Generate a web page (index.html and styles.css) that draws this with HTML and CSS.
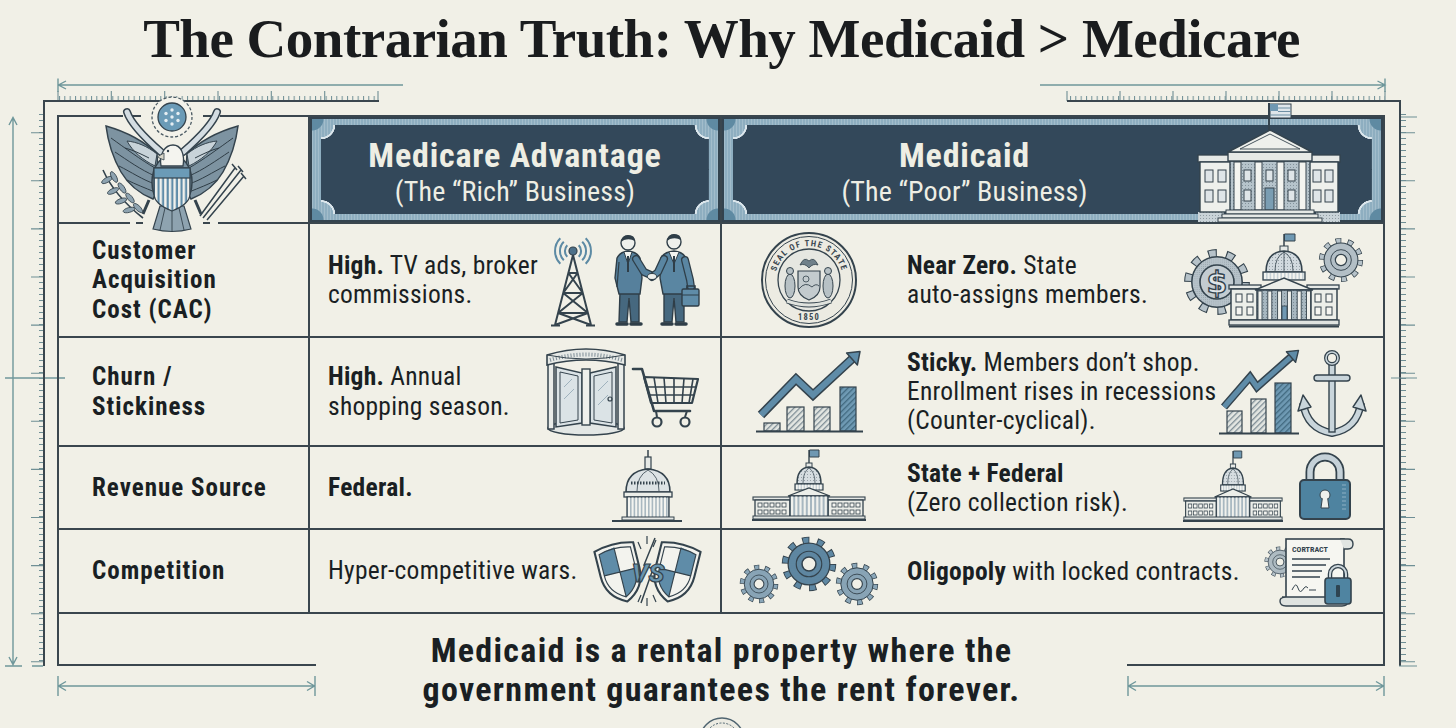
FILE: index.html
```html
<!DOCTYPE html>
<html lang="en">
<head>
<meta charset="utf-8">
<title>The Contrarian Truth: Why Medicaid &gt; Medicare</title>
<link rel="stylesheet" href="styles.css">
</head>
<body>
<svg class="defs" width="0" height="0" aria-hidden="true">
  <defs>
    <pattern id="tkH" width="5.333" height="6" patternUnits="userSpaceOnUse"><line x1="0.5" y1="0" x2="0.5" y2="6" stroke="#6f8f95" stroke-width="1"/></pattern>
    <pattern id="tkVL" x="35" y="0" width="8" height="6" patternUnits="userSpaceOnUse"><line x1="4" y1="0.5" x2="8" y2="0.5" stroke="#6f8f95" stroke-width="1"/></pattern>
    <pattern id="tkVR" width="8" height="6" patternUnits="userSpaceOnUse"><line x1="0" y1="0.5" x2="5" y2="0.5" stroke="#6f8f95" stroke-width="1"/></pattern>
    <pattern id="hatch" width="4" height="4" patternUnits="userSpaceOnUse" patternTransform="rotate(45)"><rect width="4" height="4" fill="#e3e6e2"/><rect width="1.3" height="4" fill="#7d8c95"/></pattern>
    <pattern id="hatchB" width="4" height="4" patternUnits="userSpaceOnUse" patternTransform="rotate(45)"><rect width="4" height="4" fill="#6f9ab4"/><rect width="1.3" height="4" fill="#41697f"/></pattern>
    <pattern id="dots" width="3" height="3" patternUnits="userSpaceOnUse"><circle cx="1.5" cy="1.5" r="0.55" fill="#34434d" fill-opacity="0.45"/></pattern>
    <pattern id="stripes" width="4.6" height="10" patternUnits="userSpaceOnUse"><rect width="4.6" height="10" fill="#f2f2ed"/><rect x="0.6" width="2.2" height="10" fill="#5f8ca8"/></pattern>
    <g id="gearG">
      <circle r="40" fill="none" stroke="#34434d" stroke-width="14" stroke-dasharray="12 13.133"/>
      <circle r="40" fill="none" stroke="currentColor" stroke-width="11" stroke-dasharray="9 16.133" stroke-dashoffset="-1.5"/>
      <circle r="36" fill="currentColor" stroke="#34434d" stroke-width="2.2"/>
      <circle r="36" fill="url(#dots)"/>
      <circle r="22" fill="none" stroke="#34434d" stroke-width="2"/>
      <circle r="12" fill="#f1f0e7" stroke="#34434d" stroke-width="2.6"/>
    </g>
    <g id="capitolTall">
      <line x1="55" y1="2" x2="55" y2="15" stroke="#34434d" stroke-width="1.5"/>
      <path d="M55.5,2 H66 V9 H55.5 Z" fill="#6f98b2" stroke="#34434d" stroke-width="1"/>
      <rect x="51" y="14" width="8" height="6" fill="#e7eae7" stroke="#34434d" stroke-width="1"/>
      <path d="M37,40 Q37,20 55,19 Q73,20 73,40 Z" fill="#d2dadf" stroke="#34434d" stroke-width="1.6"/>
      <path d="M37,40 Q37,20 55,19 Q73,20 73,40 Z" fill="url(#dots)"/>
      <path d="M46,39 Q46,25 55,20 M64,39 Q64,25 55,20 M55,20 V39" fill="none" stroke="#34434d" stroke-width="0.8"/>
      <rect x="34" y="40" width="42" height="8" fill="#c7d1d6" stroke="#34434d" stroke-width="1.3"/>
      <line x1="35" y1="44" x2="75" y2="44" stroke="#f3f4f0" stroke-width="6" stroke-dasharray="2 1.6"/>
      <rect x="0" y="53" width="32" height="4" fill="#e6e9e6" stroke="#34434d" stroke-width="1.3"/>
      <rect x="78" y="53" width="32" height="4" fill="#e6e9e6" stroke="#34434d" stroke-width="1.3"/>
      <rect x="2" y="57" width="28" height="31" fill="#eceee9" stroke="#34434d" stroke-width="1.5"/>
      <rect x="80" y="57" width="28" height="31" fill="#eceee9" stroke="#34434d" stroke-width="1.5"/>
      <path d="M26,58 L55,46 L84,58 Z" fill="#eceee9" stroke="#34434d" stroke-width="1.5"/>
      <rect x="28" y="58" width="54" height="30" fill="#a7b7c0" stroke="#34434d" stroke-width="1.5"/>
      <rect x="28" y="58" width="54" height="30" fill="url(#dots)"/>
      <g fill="#f0f1ed" stroke="#34434d" stroke-width="0.9">
        <rect x="29" y="59" width="4" height="29"/><rect x="38.8" y="59" width="4" height="29"/><rect x="48.6" y="59" width="4" height="29"/><rect x="58.4" y="59" width="4" height="29"/><rect x="68.2" y="59" width="4" height="29"/><rect x="77.5" y="59" width="4" height="29"/>
      </g>
      <rect x="53" y="74" width="5" height="14" fill="#6f98b2" stroke="#34434d" stroke-width="0.8"/>
      <g fill="#f5f5f1" stroke="#34434d" stroke-width="1">
        <rect x="7" y="62" width="6" height="8"/><rect x="18" y="62" width="6" height="8"/><rect x="7" y="75" width="6" height="8"/><rect x="18" y="75" width="6" height="8"/>
        <rect x="86" y="62" width="6" height="8"/><rect x="97" y="62" width="6" height="8"/><rect x="86" y="75" width="6" height="8"/><rect x="97" y="75" width="6" height="8"/>
      </g>
      <rect x="0" y="88" width="110" height="5" fill="#dfe3e0" stroke="#34434d" stroke-width="1.3"/>
      <line x1="0" y1="94.5" x2="110" y2="94.5" stroke="#34434d" stroke-width="2"/>
    </g>
    <g id="capitolWide">
      <line x1="57" y1="1" x2="57" y2="15" stroke="#34434d" stroke-width="1.4"/>
      <path d="M57.5,1 H67 V8 H57.5 Z" fill="#6f98b2" stroke="#34434d" stroke-width="1"/>
      <rect x="54" y="14" width="6" height="5" fill="#e7eae7" stroke="#34434d" stroke-width="1"/>
      <path d="M45,35 Q45,19 57,18 Q69,19 69,35 Z" fill="#d6dde1" stroke="#34434d" stroke-width="1.5"/>
      <path d="M45,35 Q45,19 57,18 Q69,19 69,35 Z" fill="url(#dots)"/>
      <path d="M51,34 Q51,23 57,19 M63,34 Q63,23 57,19" fill="none" stroke="#34434d" stroke-width="0.7"/>
      <rect x="43" y="35" width="28" height="6" fill="#c7d1d6" stroke="#34434d" stroke-width="1.2"/>
      <line x1="44" y1="38" x2="70" y2="38" stroke="#f3f4f0" stroke-width="4.5" stroke-dasharray="1.6 1.4"/>
      <rect x="1" y="48" width="39" height="3" fill="#e6e9e6" stroke="#34434d" stroke-width="1.1"/>
      <rect x="74" y="48" width="39" height="3" fill="#e6e9e6" stroke="#34434d" stroke-width="1.1"/>
      <rect x="3" y="51" width="35" height="17" fill="#eceee9" stroke="#34434d" stroke-width="1.3"/>
      <rect x="76" y="51" width="35" height="17" fill="#eceee9" stroke="#34434d" stroke-width="1.3"/>
      <path d="M36,47 L57,39 L78,47 Z" fill="#eceee9" stroke="#34434d" stroke-width="1.3"/>
      <rect x="38" y="47" width="38" height="21" fill="#a7b7c0" stroke="#34434d" stroke-width="1.3"/>
      <line x1="39" y1="57.5" x2="75" y2="57.5" stroke="#f0f1ed" stroke-width="20" stroke-dasharray="2.2 2"/>
      <g fill="#f5f5f1" stroke="#34434d" stroke-width="0.8">
        <rect x="6" y="54" width="4" height="4"/><rect x="12" y="54" width="4" height="4"/><rect x="18" y="54" width="4" height="4"/><rect x="24" y="54" width="4" height="4"/><rect x="30" y="54" width="4" height="4"/>
        <rect x="6" y="61" width="4" height="4"/><rect x="12" y="61" width="4" height="4"/><rect x="18" y="61" width="4" height="4"/><rect x="24" y="61" width="4" height="4"/><rect x="30" y="61" width="4" height="4"/>
        <rect x="80" y="54" width="4" height="4"/><rect x="86" y="54" width="4" height="4"/><rect x="92" y="54" width="4" height="4"/><rect x="98" y="54" width="4" height="4"/><rect x="104" y="54" width="4" height="4"/>
        <rect x="80" y="61" width="4" height="4"/><rect x="86" y="61" width="4" height="4"/><rect x="92" y="61" width="4" height="4"/><rect x="98" y="61" width="4" height="4"/><rect x="104" y="61" width="4" height="4"/>
      </g>
      <rect x="1" y="67" width="112" height="3" fill="#dfe3e0" stroke="#34434d" stroke-width="1"/>
      <line x1="0" y1="71" x2="114" y2="71" stroke="#34434d" stroke-width="2"/>
    </g>
  </defs>
</svg>

<main class="page">
  <h1 class="title">The Contrarian Truth: Why Medicaid &gt; Medicare</h1>

  <div class="top-rulers">
    <svg class="ruler-h" width="362" height="24" viewBox="0 0 362 24">
      <path d="M15,7 H360 M23,3 L15.5,7 L23,11 M15,0.5 V14" fill="none" stroke="#6f979b" stroke-width="1.4"/>
      <rect x="15" y="18" width="320" height="5" fill="url(#tkH)"/>
      <path d="M15,13 V23 M68.3,13 V23 M121.7,13 V23 M175,13 V23 M228.3,13 V23 M281.7,13 V23 M335,13 V23" stroke="#6f8f95" stroke-width="1.1"/>
      <line x1="0" y1="23" x2="336" y2="23" stroke="#3a464e" stroke-width="2"/>
    </svg>
    <svg class="ruler-h" width="382" height="24" viewBox="0 0 382 24">
      <path d="M2,7 H347 M339.5,3 L347,7 L339.5,11 M347,0.5 V14" fill="none" stroke="#6f979b" stroke-width="1.4"/>
      <rect x="29" y="18" width="318" height="5" fill="url(#tkH)"/>
      <path d="M29,13 V23 M82,13 V23 M135,13 V23 M188,13 V23 M241,13 V23 M294,13 V23 M347,13 V23" stroke="#6f8f95" stroke-width="1.1"/>
      <line x1="29" y1="23" x2="363" y2="23" stroke="#3a464e" stroke-width="2"/>
    </svg>
  </div>

  <div class="body-row">
    <svg class="ruler-v" width="43" height="564" viewBox="0 0 43 564">
      <path d="M13,15 V563 M9,23 L13,15.5 L17,23 M9,555 L13,562.5 L17,555 M5,564 H22 M32,564 H43" fill="none" stroke="#6f979b" stroke-width="1.4"/>
      <rect x="35" y="12" width="8" height="552" fill="url(#tkVL)"/>
      <path d="M31,30.7H43 M31,78.8H43 M31,126.9H43 M31,175H43 M31,223.1H43 M31,271.2H43 M31,319.3H43 M31,367.4H43 M31,415.5H43 M31,463.6H43 M31,511.7H43 M31,559.8H43" stroke="#6f8f95" stroke-width="1.1"/>
      <line x1="5" y1="276" x2="65" y2="276" stroke="#6f979b" stroke-width="1.3"/>
    </svg>

    <div class="frame">
      <div class="table">
        <!-- header -->
        <div class="cell head-label">
          <svg class="eagle" width="150" height="136" viewBox="0 0 150 136">
            <rect x="26" y="17.5" width="97" height="5" fill="#f1f0e7"/>
            <rect x="33" y="124.5" width="88" height="5" fill="#f1f0e7"/>
            <path d="M35,20 H44 M106,20 H114 M39,127 H46 M106,127 H113" stroke="#3a464e" stroke-width="2"/>
            <g id="wingL">
              <path d="M60,58 C48,46 30,36 9,30 C11,46 16,62 24,76 C31,88 41,97 56,103 L62,92 Z" fill="#7d93a1" stroke="#34434d" stroke-width="1.5"/>
              <path d="M60,58 C50,50 40,46 30,45 C36,56 46,64 58,70 Z" fill="#c8d3d9" stroke="#34434d" stroke-width="1"/>
              <path d="M58,72 C44,64 28,52 14,42 M58,80 C44,74 30,64 18,56 M58,88 C46,84 34,76 22,70 M58,96 C48,92 38,88 30,84 M52,62 C44,58 36,54 28,52" fill="none" stroke="#2f3d46" stroke-width="1"/>
            </g>
            <use href="#wingL" transform="matrix(-1 0 0 1 150 0)"/>
            <path d="M63,110 L56,133 Q75,138 94,133 L87,110 Z" fill="#8ea3b0" stroke="#34434d" stroke-width="1.2"/>
            <path d="M68,112 L63,134 M75,112 L75,136 M82,112 L87,134" stroke="#34434d" stroke-width="0.9"/>
            <ellipse cx="75" cy="86" rx="20" ry="27" fill="#7d93a1" stroke="#34434d" stroke-width="1.5"/>
            <path d="M6,74 C14,92 28,108 46,122" fill="none" stroke="#34434d" stroke-width="1.6"/>
            <g fill="#8ea3b0" stroke="#34434d" stroke-width="0.8">
              <ellipse rx="6" ry="2.4" transform="translate(10,84) rotate(-30)"/>
              <ellipse rx="6" ry="2.4" transform="translate(17,81) rotate(60)"/>
              <ellipse rx="6" ry="2.4" transform="translate(16,95) rotate(-25)"/>
              <ellipse rx="6" ry="2.4" transform="translate(25,92) rotate(55)"/>
              <ellipse rx="6" ry="2.4" transform="translate(24,105) rotate(-20)"/>
              <ellipse rx="6" ry="2.4" transform="translate(33,102) rotate(50)"/>
              <ellipse rx="6" ry="2.4" transform="translate(32,114) rotate(-15)"/>
              <ellipse rx="6" ry="2.4" transform="translate(41,112) rotate(45)"/>
            </g>
            <path d="M144,74 L106,122 M138,72 L103,120 M147,80 L110,124 M141,70 L146,76 M135,68 L140,74 M144,77 L149,83" fill="none" stroke="#34434d" stroke-width="1.5"/>
            <path d="M52,104 L46,118 M98,104 L104,118" stroke="#34434d" stroke-width="3"/>
            <path d="M30,16 C34,28 48,42 64,56" fill="none" stroke="#34434d" stroke-width="8" stroke-linecap="round"/>
            <path d="M30,16 C34,28 48,42 64,56" fill="none" stroke="#d4dde2" stroke-width="5" stroke-linecap="round"/>
            <path d="M120,16 C116,28 102,42 86,56" fill="none" stroke="#34434d" stroke-width="8" stroke-linecap="round"/>
            <path d="M120,16 C116,28 102,42 86,56" fill="none" stroke="#d4dde2" stroke-width="5" stroke-linecap="round"/>
            <path d="M64,70 C62,58 68,49 76,49 C84,49 88,58 86,70 Z" fill="#f4f4ef" stroke="#34434d" stroke-width="1.3"/>
            <path d="M67,57 L60,61 L67,64 Z" fill="#d8d6c9" stroke="#34434d" stroke-width="0.8"/>
            <circle cx="71" cy="55" r="1.2" fill="#34434d"/>
            <path d="M57,72 H93 V98 C93,106 85,111 75,115 C65,111 57,106 57,98 Z" fill="url(#stripes)" stroke="#34434d" stroke-width="1.3"/>
            <rect x="57" y="72" width="36" height="10" fill="#6b9bb7" stroke="#34434d" stroke-width="1.2"/>
            <circle cx="75" cy="21" r="20" fill="#f3f2ea" stroke="#4b5a63" stroke-width="1.3" stroke-dasharray="3 2"/>
            <circle cx="75" cy="21" r="14" fill="#6b9bb7" stroke="#34434d" stroke-width="1.3"/>
            <g fill="#e6eef2">
              <circle cx="75" cy="14" r="1.7"/><circle cx="69" cy="17.5" r="1.7"/><circle cx="81" cy="17.5" r="1.7"/><circle cx="75" cy="21" r="1.7"/><circle cx="69" cy="24.5" r="1.7"/><circle cx="81" cy="24.5" r="1.7"/><circle cx="75" cy="28" r="1.7"/>
            </g>
          </svg>
        </div>
        <div class="cell head">
          <div class="banner">
            <div class="banner-inner">
              <div class="banner-text">
                <div class="b-title">Medicare Advantage</div>
                <div class="b-sub">(The “Rich” Business)</div>
              </div>
            </div>
          </div>
        </div>
        <div class="cell head c3">
          <div class="banner">
            <div class="banner-inner">
              <div class="banner-text">
                <div class="b-title">Medicaid</div>
                <div class="b-sub">(The “Poor” Business)</div>
              </div>
              <svg class="bldg" width="146" height="122" viewBox="0 0 146 122">
                <line x1="73" y1="3" x2="73" y2="32" stroke="#34434d" stroke-width="2"/>
                <rect x="74" y="4" width="21" height="14" fill="#dfe6ea" stroke="#34434d" stroke-width="1"/>
                <path d="M82,8 H95 M82,11.5 H95 M74,15 H95" stroke="#6f8fa3" stroke-width="1.2"/>
                <rect x="74" y="4" width="8" height="7" fill="#6f98b2"/>
                <rect x="2" y="112" width="26" height="10" fill="#c9d3d8"/>
                <rect x="120" y="112" width="24" height="10" fill="#c9d3d8"/>
                <rect x="2" y="112" width="142" height="10" fill="url(#dots)"/>
                <rect x="2" y="55" width="34" height="7" fill="#e6e9e6" stroke="#34434d" stroke-width="1.3"/>
                <rect x="112" y="55" width="32" height="7" fill="#e6e9e6" stroke="#34434d" stroke-width="1.3"/>
                <rect x="4" y="62" width="32" height="50" fill="#eef0ec" stroke="#34434d" stroke-width="1.4"/>
                <rect x="112" y="62" width="30" height="50" fill="#eef0ec" stroke="#34434d" stroke-width="1.4"/>
                <rect x="34" y="61" width="80" height="50" fill="#b5c3cb" stroke="#34434d" stroke-width="1.4"/>
                <rect x="34" y="61" width="80" height="50" fill="url(#dots)"/>
                <g fill="#f3f4f0" stroke="#34434d" stroke-width="1">
                  <rect x="38" y="62" width="7" height="48"/><rect x="59" y="62" width="7" height="48"/><rect x="81" y="62" width="7" height="48"/><rect x="103" y="62" width="7" height="48"/>
                </g>
                <g fill="#dfe5e8" stroke="#34434d" stroke-width="1">
                  <rect x="9" y="70" width="8" height="12"/><rect x="22" y="70" width="8" height="12"/><rect x="9" y="90" width="8" height="12"/><rect x="22" y="90" width="8" height="12"/>
                  <rect x="117" y="70" width="8" height="12"/><rect x="129" y="70" width="8" height="12"/><rect x="117" y="90" width="8" height="12"/><rect x="129" y="90" width="8" height="12"/>
                  <rect x="48" y="70" width="7" height="11"/><rect x="70" y="70" width="7" height="11"/><rect x="92" y="70" width="7" height="11"/>
                  <rect x="48" y="90" width="7" height="11"/><rect x="92" y="90" width="7" height="11"/>
                </g>
                <rect x="69" y="88" width="9" height="22" fill="#7a9db2" stroke="#34434d" stroke-width="1"/>
                <rect x="32" y="52" width="84" height="9" fill="#e6e9e6" stroke="#34434d" stroke-width="1.4"/>
                <path d="M32,52 L74,30 L116,52 Z" fill="#eef0ec" stroke="#34434d" stroke-width="1.5"/>
                <path d="M44,49 L74,34 L104,49 Z" fill="none" stroke="#34434d" stroke-width="0.9"/>
                <rect x="30" y="110" width="88" height="4" fill="#e6e9e6" stroke="#34434d" stroke-width="1"/>
                <rect x="26" y="114" width="96" height="4" fill="#e6e9e6" stroke="#34434d" stroke-width="1"/>
                <rect x="22" y="118" width="104" height="4" fill="#e6e9e6" stroke="#34434d" stroke-width="1"/>
              </svg>
            </div>
          </div>
        </div>

        <!-- row 1 -->
        <div class="cell lab"><div class="txt">Customer<br>Acquisition<br>Cost (CAC)</div></div>
        <div class="cell mc">
          <div class="txt"><b>High.</b> TV ads, broker<br>commissions.</div>
          <div class="icons gap16">
            <svg class="ic" width="46" height="94" viewBox="0 0 46 94">
              <path d="M17.3,12.3 A8,8 0 0 0 17.3,23.7 M13.8,8.8 A13,13 0 0 0 13.8,27.2 M10.3,5.3 A18,18 0 0 0 10.3,30.7 M28.7,12.3 A8,8 0 0 1 28.7,23.7 M32.2,8.8 A13,13 0 0 1 32.2,27.2 M35.7,5.3 A18,18 0 0 1 35.7,30.7" fill="none" stroke="#5c8aa4" stroke-width="2"/>
              <path d="M23,22 L5,92 M23,22 L41,92 M18.4,40 H27.6 M13.2,60 H32.8 M8.1,80 H37.9 M18.4,40 L32.8,60 M27.6,40 L13.2,60 M13.2,60 L37.9,80 M32.8,60 L8.1,80 M8.1,80 L41,92 M37.9,80 L5,92 M23,22 L27.6,40 M23,22 L18.4,40" fill="none" stroke="#34434d" stroke-width="2"/>
              <path d="M1,92.5 H10 M36,92.5 H45" stroke="#34434d" stroke-width="2"/>
              <circle cx="23" cy="18" r="4" fill="#4d7089" stroke="#34434d" stroke-width="1.2"/>
            </svg>
            <svg class="ic" width="88" height="97" viewBox="0 0 88 97">
              <path d="M8,60 L7,90 L15,90 L17,66 L19,90 L27,90 L27,60 Z" fill="#46687f" stroke="#2f3e48" stroke-width="1.4"/>
              <path d="M5,92 H15 M19,92 H29" stroke="#2f3e48" stroke-width="3.5" stroke-linecap="round"/>
              <path d="M5,26 Q8,20 16,19 Q25,20 28,26 L30,46 L28,62 L7,62 L3,46 Z" fill="#56809c" stroke="#2f3e48" stroke-width="1.4"/>
              <path d="M12,20 L16,32 L20,20" fill="#f2f3ef" stroke="#2f3e48" stroke-width="1"/>
              <path d="M16,24 L16,40" stroke="#2f3e48" stroke-width="2"/>
              <path d="M7,30 L5,55" stroke="#2f3e48" stroke-width="1.2"/>
              <path d="M24,27 L32,40 L41,44" fill="none" stroke="#2f3e48" stroke-width="8" stroke-linecap="round" stroke-linejoin="round"/>
              <path d="M24,27 L32,40 L41,44" fill="none" stroke="#56809c" stroke-width="5.4" stroke-linecap="round" stroke-linejoin="round"/>
              <circle cx="16" cy="11" r="7" fill="#eef0ec" stroke="#2f3e48" stroke-width="1.4"/>
              <path d="M9,10 Q10,3 16,3 Q23,3 23,9 Q18,6 12,8 Z" fill="#2f3e48"/>
              <path d="M52,60 L52,90 L60,90 L62,66 L64,90 L72,90 L72,60 Z" fill="#46687f" stroke="#2f3e48" stroke-width="1.4"/>
              <path d="M50,92 H60 M64,92 H74" stroke="#2f3e48" stroke-width="3.5" stroke-linecap="round"/>
              <path d="M49,26 Q52,20 62,19 Q71,20 74,26 L77,46 L74,62 L51,62 L48,46 Z" fill="#5a86a2" stroke="#2f3e48" stroke-width="1.4"/>
              <path d="M57,20 L62,32 L67,20" fill="#f2f3ef" stroke="#2f3e48" stroke-width="1"/>
              <path d="M62,24 L62,40" stroke="#2f3e48" stroke-width="2"/>
              <path d="M52,27 L46,40 L40,45" fill="none" stroke="#2f3e48" stroke-width="8" stroke-linecap="round" stroke-linejoin="round"/>
              <path d="M52,27 L46,40 L40,45" fill="none" stroke="#5a86a2" stroke-width="5.4" stroke-linecap="round" stroke-linejoin="round"/>
              <path d="M73,28 L78,48 L79,55" fill="none" stroke="#2f3e48" stroke-width="8" stroke-linecap="round" stroke-linejoin="round"/>
              <path d="M73,28 L78,48 L79,55" fill="none" stroke="#5a86a2" stroke-width="5.4" stroke-linecap="round" stroke-linejoin="round"/>
              <path d="M75,58 V54 H83 V58" fill="none" stroke="#2f3e48" stroke-width="1.6"/>
              <rect x="70" y="57" width="17" height="17" rx="1.5" fill="#5f8ca8" stroke="#2f3e48" stroke-width="1.4"/>
              <path d="M70,63 H87" stroke="#2f3e48" stroke-width="1"/>
              <ellipse cx="40" cy="44.5" rx="4.5" ry="3" fill="#eef0ec" stroke="#2f3e48" stroke-width="1"/>
              <circle cx="62" cy="10" r="7" fill="#eef0ec" stroke="#2f3e48" stroke-width="1.4"/>
              <path d="M55,9 Q56,2 62,2 Q69,2 69,8 Q64,5 58,7 Z" fill="#2f3e48"/>
            </svg>
          </div>
        </div>
        <div class="cell md c3">
          <div class="lead">
            <svg class="ic" width="98" height="98" viewBox="0 0 98 98">
              <defs><path id="sealTop" d="M15,49 A34,34 0 0 1 83,49"/></defs>
              <circle cx="49" cy="49" r="47" fill="#ecebe2" stroke="#34434d" stroke-width="2"/>
              <circle cx="49" cy="49" r="43.5" fill="none" stroke="#34434d" stroke-width="1"/>
              <circle cx="49" cy="49" r="31" fill="#e6e7e1" stroke="#34434d" stroke-width="1.3"/>
              <text class="seal-txt"><textPath href="#sealTop" startOffset="50%" text-anchor="middle">SEAL OF THE STATE</textPath></text>
              <text class="seal-txt" x="49" y="89" text-anchor="middle">1850</text>
              <ellipse cx="30" cy="55" rx="5" ry="12" fill="#b7c1c5" stroke="#34434d" stroke-width="1"/>
              <circle cx="30" cy="40" r="3.5" fill="#b7c1c5" stroke="#34434d" stroke-width="1"/>
              <ellipse cx="68" cy="55" rx="5" ry="12" fill="#b7c1c5" stroke="#34434d" stroke-width="1"/>
              <circle cx="68" cy="40" r="3.5" fill="#b7c1c5" stroke="#34434d" stroke-width="1"/>
              <path d="M38,40 H60 V56 Q60,65 49,69 Q38,65 38,56 Z" fill="#c3cbce" stroke="#34434d" stroke-width="1.2"/>
              <path d="M39,58 Q45,50 52,56 Q56,52 59,55" fill="none" stroke="#34434d" stroke-width="0.9"/>
              <circle cx="46" cy="48" r="3" fill="none" stroke="#34434d" stroke-width="0.8"/>
              <path d="M40,34 Q44,25 49,30 Q54,25 58,34 Q53,32 49,37 Q45,32 40,34 Z" fill="#6f808a" stroke="#34434d" stroke-width="0.8"/>
              <path d="M27,70 Q49,78 71,70" fill="none" stroke="#34434d" stroke-width="5"/>
              <path d="M27,70 Q49,78 71,70" fill="none" stroke="#dfe2dd" stroke-width="3"/>
            </svg>
          </div>
          <div class="txt"><b>Near Zero.</b> State<br>auto-assigns members.</div>
          <div class="icons">
            <svg class="ic" width="184" height="96" viewBox="0 0 184 96">
              <use href="#gearG" class="gear-gray" transform="translate(36,50) scale(0.7)"/>
              <circle cx="36" cy="50" r="17" fill="#c3ccd1" stroke="#34434d" stroke-width="1.6"/>
              <text class="dollar" x="36" y="61" text-anchor="middle">$</text>
              <use href="#gearG" class="gear-gray" transform="translate(160,28) scale(0.47)"/>
              <use href="#capitolTall" x="48" y="0"/>
            </svg>
          </div>
        </div>

        <!-- row 2 -->
        <div class="cell lab"><div class="txt">Churn /<br>Stickiness</div></div>
        <div class="cell mc">
          <div class="txt"><b>High.</b> Annual<br>shopping season.</div>
          <div class="icons gap6">
            <svg class="ic" width="80" height="90" viewBox="0 0 80 90">
              <ellipse cx="40" cy="81" rx="38" ry="7" fill="#e3e7e5" stroke="#34434d" stroke-width="1.6"/>
              <path d="M10,20 L36,26 L36,76 L10,80 Z" fill="#dbe3e6" stroke="#34434d" stroke-width="1.5"/>
              <path d="M44,26 L70,20 L70,80 L44,76 Z" fill="#dbe3e6" stroke="#34434d" stroke-width="1.5"/>
              <path d="M14,25 L32,29 L32,73 L14,76 Z M48,29 L66,25 L66,76 L48,73 Z" fill="none" stroke="#34434d" stroke-width="1"/>
              <path d="M18,40 L26,32 M18,52 L28,42 M52,44 L62,34 M52,58 L62,48" stroke="#9fb2bd" stroke-width="1"/>
              <rect x="36" y="22" width="8" height="56" fill="#eef0ec" stroke="#34434d" stroke-width="1.4"/>
              <rect x="2" y="16" width="6" height="66" fill="#e9ece9" stroke="#34434d" stroke-width="1.5"/>
              <rect x="72" y="16" width="6" height="66" fill="#e9ece9" stroke="#34434d" stroke-width="1.5"/>
              <path d="M1,8 Q40,-4 79,8 L79,18 Q40,8 1,18 Z" fill="#e6e9e6" stroke="#34434d" stroke-width="1.6"/>
              <path d="M4,13 Q40,2 76,13" fill="none" stroke="#7c8c95" stroke-width="4" stroke-dasharray="1 2"/>
              <path d="M1,8 Q40,16 79,8" fill="none" stroke="#34434d" stroke-width="1"/>
              <circle cx="64" cy="52" r="2" fill="none" stroke="#34434d" stroke-width="1.2"/>
            </svg>
            <svg class="ic cart" width="68" height="64" viewBox="0 0 68 64">
              <path d="M1,4 H10 L22,46 H58" fill="none" stroke="#34434d" stroke-width="2.6" stroke-linejoin="round" stroke-linecap="round"/>
              <path d="M12,12 L66,14 L60,38 L19,38 Z" fill="none" stroke="#34434d" stroke-width="2.2" stroke-linejoin="round"/>
              <path d="M22,12.4 L26,38 M32,12.8 L34,38 M42,13.2 L42,38 M52,13.6 L50,38 M61,14 L57,38 M15,22 H63.6 M17,30 H61.5" stroke="#34434d" stroke-width="1.6"/>
              <path d="M24,46 L25,52 M55,46 L53,52" stroke="#34434d" stroke-width="2"/>
              <circle cx="25" cy="57" r="4.5" fill="#f1f0e7" stroke="#34434d" stroke-width="2.2"/>
              <circle cx="53" cy="57" r="4.5" fill="#f1f0e7" stroke="#34434d" stroke-width="2.2"/>
            </svg>
          </div>
        </div>
        <div class="cell md c3">
          <div class="lead">
            <svg class="ic" width="107" height="86" viewBox="0 0 107 86">
              <rect x="8" y="74" width="16" height="8" fill="url(#hatch)" stroke="#34434d" stroke-width="1.2"/>
              <rect x="31" y="58" width="17" height="24" fill="url(#hatch)" stroke="#34434d" stroke-width="1.2"/>
              <rect x="58" y="58" width="16" height="24" fill="url(#hatch)" stroke="#34434d" stroke-width="1.2"/>
              <rect x="84" y="38" width="16" height="44" fill="url(#hatchB)" stroke="#34434d" stroke-width="1.2"/>
              <path d="M0,82.5 H107" stroke="#34434d" stroke-width="2"/>
              <path d="M5,66 L40,30 L57,46 L96,10" fill="none" stroke="#34434d" stroke-width="9"/>
              <path d="M5,66 L40,30 L57,46 L96,10" fill="none" stroke="#5f8ca8" stroke-width="6"/>
              <path d="M104,2.5 L101.4,15.9 L90.6,4.1 Z" fill="#5f8ca8" stroke="#34434d" stroke-width="1.5" stroke-linejoin="round"/>
            </svg>
          </div>
          <div class="txt"><b>Sticky.</b> Members don’t shop.<br>Enrollment rises in recessions<br>(Counter-cyclical).</div>
          <div class="icons">
            <svg class="ic" width="148" height="90" viewBox="0 0 148 90">
              <rect x="10" y="64" width="15" height="22" fill="url(#hatch)" stroke="#34434d" stroke-width="1.2"/>
              <rect x="34" y="52" width="15" height="34" fill="url(#hatch)" stroke="#34434d" stroke-width="1.2"/>
              <rect x="58" y="36" width="16" height="50" fill="url(#hatchB)" stroke="#34434d" stroke-width="1.2"/>
              <path d="M2,86.5 H82" stroke="#34434d" stroke-width="2"/>
              <path d="M7,60 L33,30 L40,40 L74,10" fill="none" stroke="#34434d" stroke-width="8"/>
              <path d="M7,60 L33,30 L40,40 L74,10" fill="none" stroke="#5f8ca8" stroke-width="5"/>
              <path d="M81.5,3.4 L78.6,15.25 L69.4,4.75 Z" fill="#5f8ca8" stroke="#34434d" stroke-width="1.4" stroke-linejoin="round"/>
              <path d="M86,56 Q90,82 115,86 Q140,82 144,56" fill="none" stroke="#34434d" stroke-width="8"/>
              <path d="M86,56 Q90,82 115,86 Q140,82 144,56" fill="none" stroke="#c9d5db" stroke-width="5"/>
              <path d="M81,64 L86,48 L94,60 Z M149,64 L144,48 L136,60 Z" fill="#c9d5db" stroke="#34434d" stroke-width="1.4" stroke-linejoin="round"/>
              <rect x="112" y="17" width="6" height="68" fill="#c9d5db" stroke="#34434d" stroke-width="1.4"/>
              <rect x="97" y="28" width="36" height="6" rx="3" fill="#c9d5db" stroke="#34434d" stroke-width="1.4"/>
              <circle cx="115" cy="11" r="6" fill="none" stroke="#34434d" stroke-width="4"/>
              <circle cx="115" cy="11" r="6" fill="none" stroke="#c9d5db" stroke-width="1.6"/>
            </svg>
          </div>
        </div>

        <!-- row 3 -->
        <div class="cell lab"><div class="txt">Revenue Source</div></div>
        <div class="cell mc">
          <div class="txt"><b>Federal.</b></div>
          <div class="icons mr18">
            <svg class="ic up2" width="70" height="72" viewBox="0 0 70 72">
              <line x1="36" y1="0" x2="36" y2="8" stroke="#34434d" stroke-width="1.5"/>
              <rect x="33" y="7" width="6" height="12" fill="#e6e9e6" stroke="#34434d" stroke-width="1.2"/>
              <path d="M14,42 Q14,21 36,19 Q58,21 58,42 Z" fill="#dde3e5" stroke="#34434d" stroke-width="1.6"/>
              <path d="M25,41 Q25,26 36,20 M47,41 Q47,26 36,20" fill="none" stroke="#34434d" stroke-width="0.8"/>
              <path d="M19,33 H53" stroke="#34434d" stroke-width="3" stroke-dasharray="1.5 1.5"/>
              <rect x="12" y="42" width="48" height="5" fill="#eceee9" stroke="#34434d" stroke-width="1.3"/>
              <rect x="15" y="47" width="42" height="21" fill="#a9b8c0" stroke="#34434d" stroke-width="1.3"/>
              <line x1="16" y1="57.5" x2="56" y2="57.5" stroke="#f3f4f0" stroke-width="20" stroke-dasharray="2 1.6"/>
              <rect x="10" y="67" width="52" height="3" fill="#e6e9e6" stroke="#34434d" stroke-width="1"/>
              <line x1="0" y1="71" x2="70" y2="71" stroke="#34434d" stroke-width="2"/>
            </svg>
          </div>
        </div>
        <div class="cell md c3">
          <div class="lead">
            <svg class="ic up2" width="114" height="73" viewBox="0 0 114 73"><use href="#capitolWide"/></svg>
          </div>
          <div class="txt"><b>State + Federal</b><br>(Zero collection risk).</div>
          <div class="icons gap15 mr13">
            <svg class="ic up2" width="100" height="72" viewBox="0 0 100 72"><use href="#capitolWide" transform="scale(0.877 1)"/></svg>
            <svg class="ic" width="54" height="66" viewBox="0 0 54 66">
              <path d="M12,28 V17 A15,15 0 0 1 42,17 V28" fill="none" stroke="#34434d" stroke-width="9"/>
              <path d="M12,28 V17 A15,15 0 0 1 42,17 V28" fill="none" stroke="#c5d1d8" stroke-width="5.5"/>
              <rect x="2" y="25" width="50" height="39" rx="4" fill="#4e83a0" stroke="#34434d" stroke-width="2"/>
              <path d="M44,30 H48 M44,34 H48 M44,38 H48 M44,42 H48 M44,46 H48 M44,50 H48 M44,54 H48" stroke="#8db0c4" stroke-width="1"/>
              <circle cx="27" cy="40" r="5" fill="#eef0ec" stroke="#34434d" stroke-width="1"/>
              <path d="M24.5,42 L23,53 H31 L29.5,42 Z" fill="#eef0ec" stroke="#34434d" stroke-width="1"/>
              <circle cx="27" cy="40" r="4" fill="#eef0ec"/>
            </svg>
          </div>
        </div>

        <!-- row 4 -->
        <div class="cell lab"><div class="txt">Competition</div></div>
        <div class="cell mc">
          <div class="txt">Hyper-competitive wars.</div>
          <div class="icons">
            <svg class="ic" width="105" height="72" viewBox="0 0 105 72">
              <g transform="translate(25,37) rotate(-14) scale(0.95)">
                <path d="M-21,-27 Q0,-33 21,-27 L21,0 Q21,22 0,32 Q-21,22 -21,0 Z" fill="#f3f3ee" stroke="#34434d" stroke-width="2.2"/>
                <path d="M-17,-23 Q-8,-26 0,-26.5 L0,0 L-17,0 Z M0,0 L17,0 Q17,18 0,27 Z" fill="#5f8ca8"/>
                <path d="M-17,-23 Q0,-28 17,-23 L17,0 Q17,18 0,27 Q-17,18 -17,0 Z M0,-26.5 V27 M-17,0 H17" fill="none" stroke="#34434d" stroke-width="1.2"/>
              </g>
              <g transform="translate(80,37) rotate(14) scale(0.95)">
                <path d="M-21,-27 Q0,-33 21,-27 L21,0 Q21,22 0,32 Q-21,22 -21,0 Z" fill="#f3f3ee" stroke="#34434d" stroke-width="2.2"/>
                <path d="M0,-26.5 Q8,-26 17,-23 L17,0 L0,0 Z M0,0 L-17,0 Q-17,18 0,27 Z" fill="#5f8ca8"/>
                <path d="M-17,-23 Q0,-28 17,-23 L17,0 Q17,18 0,27 Q-17,18 -17,0 Z M0,-26.5 V27 M-17,0 H17" fill="none" stroke="#34434d" stroke-width="1.2"/>
              </g>
              <path d="M60,3 L49,30 L58,34 L46,68" fill="none" stroke="#34434d" stroke-width="1.5"/>
              <text class="vs" x="53" y="47" text-anchor="middle">VS</text>
              <path d="M43,7 L46,14 M52,1 L52,9 M61,5 L58,12 M43,67 L46,60 M52,71 L52,63 M61,67 L58,60" stroke="#34434d" stroke-width="1.2"/>
            </svg>
          </div>
        </div>
        <div class="cell md c3">
          <div class="lead">
            <svg class="ic" width="140" height="70" viewBox="0 0 140 70">
              <use href="#gearG" class="gear-b1" transform="translate(20,48) scale(0.41)"/>
              <use href="#gearG" class="gear-b1" transform="translate(118,48) scale(0.45)"/>
              <use href="#gearG" class="gear-b2" transform="translate(70,28) scale(0.58)"/>
            </svg>
          </div>
          <div class="txt"><b>Oligopoly</b> with locked contracts.</div>
          <div class="icons mr9">
            <svg class="ic" width="92" height="72" viewBox="0 0 92 72">
              <use href="#gearG" class="gear-gray" transform="translate(16,27) scale(0.33)"/>
              <rect x="22" y="4" width="58" height="60" fill="#f6f6f1" stroke="#34434d" stroke-width="1.6"/>
              <path d="M76,4 H84 Q89,4 89,9 Q89,14 84,14 H80" fill="#e1e5e2" stroke="#34434d" stroke-width="1.4"/>
              <text class="contract" x="28" y="17">CORTRACT</text>
              <path d="M28,24 H66 M28,30 H62 M28,36 H58 M28,42 H56" stroke="#34434d" stroke-width="1.4"/>
              <path d="M28,55 q4,-9 6,-2 t6,0 q2,-3 4,0 M45,55 H52" fill="none" stroke="#34434d" stroke-width="1"/>
              <path d="M18,62 H78 Q84,62 84,66 Q84,71 78,71 H22 Q16,71 16,66 Q16,62 22,62 Z" fill="#dfe3e0" stroke="#34434d" stroke-width="1.4"/>
              <path d="M66,45 V39 A8,8 0 0 1 82,39 V45" fill="none" stroke="#34434d" stroke-width="4.5"/>
              <path d="M66,45 V39 A8,8 0 0 1 82,39 V45" fill="none" stroke="#cdd7dc" stroke-width="2"/>
              <rect x="61" y="43" width="26" height="26" rx="3" fill="#4f84a1" stroke="#34434d" stroke-width="1.6"/>
              <rect x="72" y="50" width="4" height="12" rx="1" fill="#2e4452"/>
            </svg>
          </div>
        </div>

        <!-- footer band -->
        <div class="footer">
          <div class="foot-side"></div>
          <p class="moral">Medicaid is a rental property where the<br>government guarantees the rent forever.</p>
          <div class="foot-side"></div>
        </div>
      </div>
    </div>

    <svg class="ruler-v" width="55" height="564" viewBox="0 0 55 564">
      <rect x="0" y="12" width="8" height="552" fill="url(#tkVR)"/>
      <path d="M0,30.7H14 M0,78.8H14 M0,126.9H14 M0,175H14 M0,223.1H14 M0,271.2H14 M0,319.3H14 M0,367.4H14 M0,415.5H14 M0,463.6H14 M0,511.7H14 M0,559.8H14 M0,15H16 M-10,276H16 M-2,564H16" stroke="#6f8f95" stroke-width="1.1"/>
    </svg>
  </div>

  <div class="dims">
    <svg class="dim" width="259" height="20" viewBox="0 0 259 20">
      <path d="M1,0 V20 M258,0 V20 M1,10 H258 M9,5.5 L1.5,10 L9,14.5 M250,5.5 L257.5,10 L250,14.5" fill="none" stroke="#6f979b" stroke-width="1.4"/>
    </svg>
    <div class="mid">
      <svg class="seal-peek" width="48" height="12" viewBox="0 0 48 12">
        <circle cx="24" cy="24" r="22" fill="#ecebe2" stroke="#4f6470" stroke-width="1.5"/>
        <circle cx="24" cy="24" r="17" fill="none" stroke="#4f6470" stroke-width="1" stroke-dasharray="2 1.5"/>
      </svg>
    </div>
    <svg class="dim" width="258" height="20" viewBox="0 0 258 20">
      <path d="M1,0 V20 M257,0 V20 M1,10 H257 M9,5.5 L1.5,10 L9,14.5 M249,5.5 L256.5,10 L249,14.5" fill="none" stroke="#6f979b" stroke-width="1.4"/>
    </svg>
  </div>
</main>
</body>
</html>
```

FILE: styles.css
```css
* { box-sizing: border-box; }

html, body { margin: 0; padding: 0; }

body {
  width: 1456px;
  height: 728px;
  overflow: hidden;
  background: #f1f0e7;
  color: #1a1f23;
  font-family: "Roboto Condensed", "Liberation Sans Narrow", "DejaVu Sans Condensed", Roboto, sans-serif;
}

.defs { display: block; width: 0; height: 0; overflow: hidden; }

.title {
  margin: 0;
  height: 78px;
  line-height: 78px;
  padding-right: 13px;
  text-align: center;
  font-family: "Liberation Serif", "Times New Roman", serif;
  font-weight: 700;
  font-size: 55px;
  color: #1a1c1e;
  letter-spacing: -0.5px;
  white-space: nowrap;
}

.top-rulers {
  height: 24px;
  display: flex;
  justify-content: space-between;
  padding: 0 36px 0 43px;
}

.ruler-h, .ruler-v { display: block; flex: none; overflow: visible; }

.body-row { display: flex; height: 564px; }

.frame {
  width: 1358px;
  flex: none;
  border-left: 2px solid #3a464e;
  border-right: 2px solid #3a464e;
  padding: 13px 14px 0 12px;
}

.table {
  display: grid;
  grid-template-columns: 251px 412px 661px;
  grid-template-rows: 107px 114px 109px 83px 84px 52px;
  border: 2px solid #3a464e;
  border-bottom: 0;
}

.cell {
  border-right: 2px solid #3a464e;
  border-bottom: 2px solid #3a464e;
  display: flex;
  align-items: center;
  min-width: 0;
}
.cell.c3 { border-right: 0; }

/* header */
.head-label { padding-left: 38px; }
.eagle { display: block; flex: none; margin-top: -11px; overflow: visible; }

.head { align-items: stretch; }

.banner {
  flex: 1;
  display: flex;
  padding: 6px 9px;
  border: 2px solid #33434f;
  background-color: #8eaec0;
  background-image:
    radial-gradient(circle at 0 0, #5f8aa2 0 11px, transparent 12px),
    radial-gradient(circle at 100% 0, #5f8aa2 0 11px, transparent 12px),
    radial-gradient(circle at 0 100%, #5f8aa2 0 11px, transparent 12px),
    radial-gradient(circle at 100% 100%, #5f8aa2 0 11px, transparent 12px),
    repeating-linear-gradient(90deg, rgba(255, 255, 255, 0.18) 0 1px, transparent 1px 3px);
}

.banner-inner {
  flex: 1;
  display: flex;
  align-items: center;
  min-width: 0;
  background:
    radial-gradient(circle at 0 0, transparent 12px, #dbe6ec 12.5px 14px, #33485a 14.5px) 0 0 / 51% 51% no-repeat,
    radial-gradient(circle at 100% 0, transparent 12px, #dbe6ec 12.5px 14px, #33485a 14.5px) 100% 0 / 51% 51% no-repeat,
    radial-gradient(circle at 0 100%, transparent 12px, #dbe6ec 12.5px 14px, #33485a 14.5px) 0 100% / 51% 51% no-repeat,
    radial-gradient(circle at 100% 100%, transparent 12px, #dbe6ec 12.5px 14px, #33485a 14.5px) 100% 100% / 51% 51% no-repeat;
}

.banner-text {
  flex: 1;
  text-align: center;
  color: #eeeee4;
  white-space: nowrap;
  padding-top: 4px;
}
.b-title { font-weight: 700; font-size: 34px; line-height: 40px; letter-spacing: 0.8px; }
.b-sub { font-size: 28px; line-height: 33px; letter-spacing: 0.15px; }

.bldg {
  display: block;
  flex: none;
  align-self: flex-end;
  margin: 0 30px -8px 0;
  overflow: visible;
}

/* body rows */
.txt {
  font-size: 25.5px;
  line-height: 29.5px;
  letter-spacing: 0.25px;
  white-space: nowrap;
}
.txt b { font-weight: 700; }

.lab { padding-left: 33px; font-weight: 700; }
.lab .txt { font-size: 25px; line-height: 29.5px; letter-spacing: 1px; }

.mc {
  padding: 0 20px 0 18px;
  justify-content: space-between;
}

.cell.md {
  display: grid;
  grid-template-columns: 174px 1fr auto;
  align-items: center;
  padding-right: 18px;
}
.md .lead { display: flex; justify-content: center; }
.md .txt { padding-left: 11px; line-height: 29px; }

.icons { display: flex; align-items: center; }
.gap16 { gap: 16px; }
.gap6 { gap: 6px; }
.gap15 { gap: 15px; }
.mr18 { margin-right: 18px; }
.mr13 { margin-right: 13px; }
.mr9 { margin-right: 9px; }

.ic { display: block; flex: none; overflow: visible; }
.cart { margin-top: 10px; }
.up2 { margin-bottom: 4px; }

.gear-gray { color: #b6c2c9; }
.gear-b1 { color: #8aa6b8; }
.gear-b2 { color: #5f88a3; }

.seal-txt {
  font-family: "Roboto Condensed", Roboto, sans-serif;
  font-size: 8.5px;
  font-weight: 700;
  letter-spacing: 1.2px;
  fill: #3a4750;
}
.dollar {
  font-family: "DejaVu Sans", sans-serif;
  font-size: 30px;
  font-weight: 700;
  fill: #dfe5e8;
  stroke: #34434d;
  stroke-width: 1.4px;
}
.vs {
  font-family: Roboto, sans-serif;
  font-size: 26px;
  font-weight: 900;
  font-style: italic;
  fill: #6a95ae;
  stroke: #34434d;
  stroke-width: 1.2px;
}
.contract {
  font-family: "Roboto Condensed", Roboto, sans-serif;
  font-size: 8px;
  font-weight: 700;
  fill: #34434d;
}

/* footer band */
.footer {
  grid-column: 1 / -1;
  display: grid;
  grid-template-columns: 257px 1fr 256px;
  grid-template-rows: 52px;
}
.foot-side { border-bottom: 2px solid #3a464e; }
.moral {
  margin: 0;
  padding-top: 17px;
  text-align: center;
  font-weight: 700;
  font-size: 34px;
  line-height: 39px;
  letter-spacing: 1.3px;
  color: #1a1f23;
  white-space: nowrap;
}

/* bottom dimension marks */
.dims {
  display: flex;
  height: 62px;
  padding: 10px 71px 0 57px;
}
.dim { display: block; flex: none; }
.dims .mid {
  flex: 1;
  display: flex;
  justify-content: center;
  align-items: flex-end;
}
.seal-peek { display: block; }
```
